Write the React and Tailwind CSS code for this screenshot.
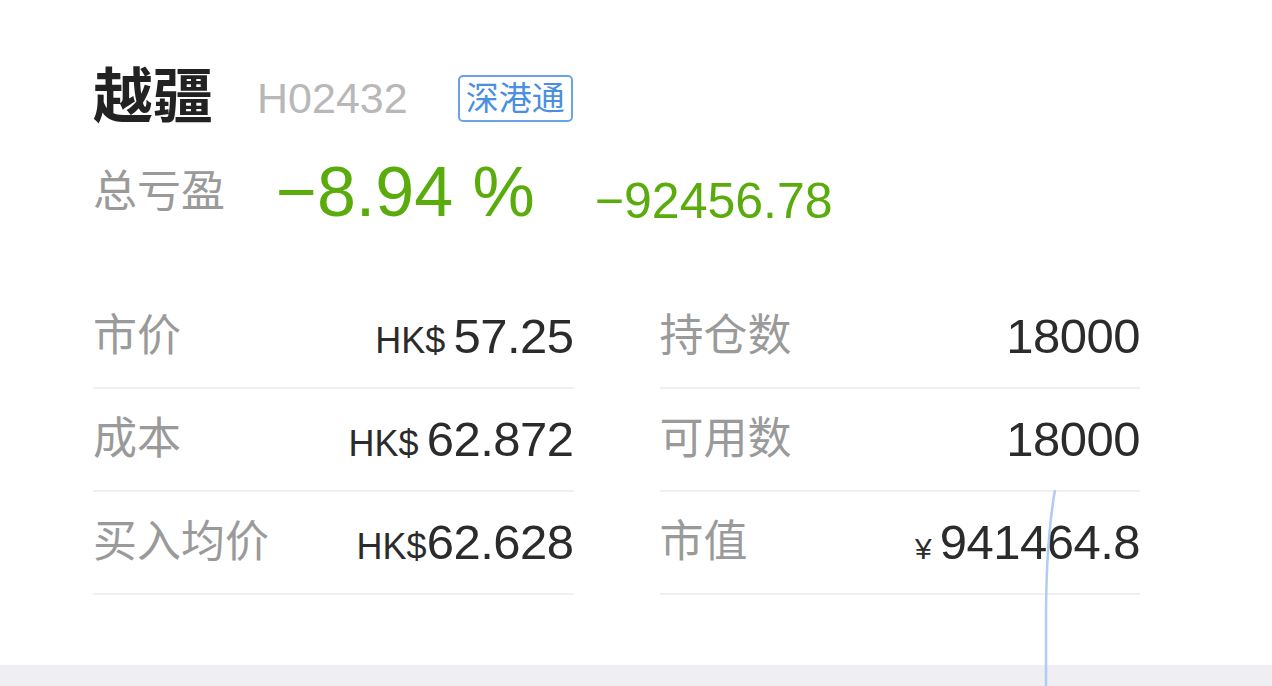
import React from 'react';

const rows = [
    [
        { label: '市价', unit: 'HK$', gap: true, value: '57.25' },
        { label: '持仓数', value: '18000' },
    ],
    [
        { label: '成本', unit: 'HK$', gap: true, value: '62.872' },
        { label: '可用数', value: '18000' },
    ],
    [
        { label: '买入均价', unit: 'HK$', gap: false, value: '62.628' },
        { label: '市值', unit: '¥', gap: true, small: true, value: '941464.8' },
    ],
];

const Cell = ({ label, unit, gap, small, value }) => (
    <div className="flex items-center justify-between h-[103px] border-b-2 border-[#f0f0f2]">
        <span className="text-[44px] leading-none text-[#9a9a9a] pb-[2px]">{label}</span>
        <span className="flex items-baseline text-[#2b2b2b]">
            {unit && (
                <span className={`${small ? 'text-[30px]' : 'text-[36px]'} leading-none ${gap ? 'mr-[8px]' : ''}`}>{unit}</span>
            )}
            <span className="text-[49px] leading-none tracking-[-0.5px]">{value}</span>
        </span>
    </div>
);

export default function App() {
    return (
        <div
            className="relative w-[1272px] h-[686px] bg-white overflow-hidden flex flex-col"
            style={{ fontFamily: '"Liberation Sans", "Noto Sans CJK SC", sans-serif' }}
        >
            <div className="flex-1 pl-[93px] pr-[132px]">
                {/* Header */}
                <div className="mt-[70px] h-[56px] flex items-center">
                    <h1 className="text-[60px] leading-none font-bold text-[#222]">越疆</h1>
                    <span className="ml-[44px] text-[43px] leading-none text-[#b8b8b8]">H02432</span>
                    <span className="ml-[50px] h-[47px] px-[6px] flex items-center border-2 border-[#6aa2e6] rounded-[5px] text-[33px] leading-none text-[#4a8fe0]">
                        深港通
                    </span>
                </div>

                <div className="mt-[38px] h-[56px] flex items-center">
                    <span className="text-[44px] leading-none text-[#9a9a9a]">总亏盈</span>
                    <span className="ml-[51px] text-[70px] leading-none text-[#5aac0c]">−8.94 %</span>
                    <span className="ml-[60px] mt-[18px] text-[50px] leading-none text-[#5aac0c]">−92456.78</span>
                </div>

                {/* Position grid */}
                <div className="mt-[66px] grid grid-cols-2 gap-x-[86px]">
                    {rows.map((pair, i) => (
                        <React.Fragment key={i}>
                            <Cell {...pair[0]} />
                            <Cell {...pair[1]} />
                        </React.Fragment>
                    ))}
                </div>
            </div>

            <div className="h-[21px] bg-[#efeef3]" />

            <svg className="absolute left-0 top-0 pointer-events-none" width="1272" height="686">
                <path d="M1055 490 C1048 530 1046 580 1046 620 L1046 686" fill="none" stroke="#aecdf4" strokeWidth="2.5" />
            </svg>
        </div>
    );
}
